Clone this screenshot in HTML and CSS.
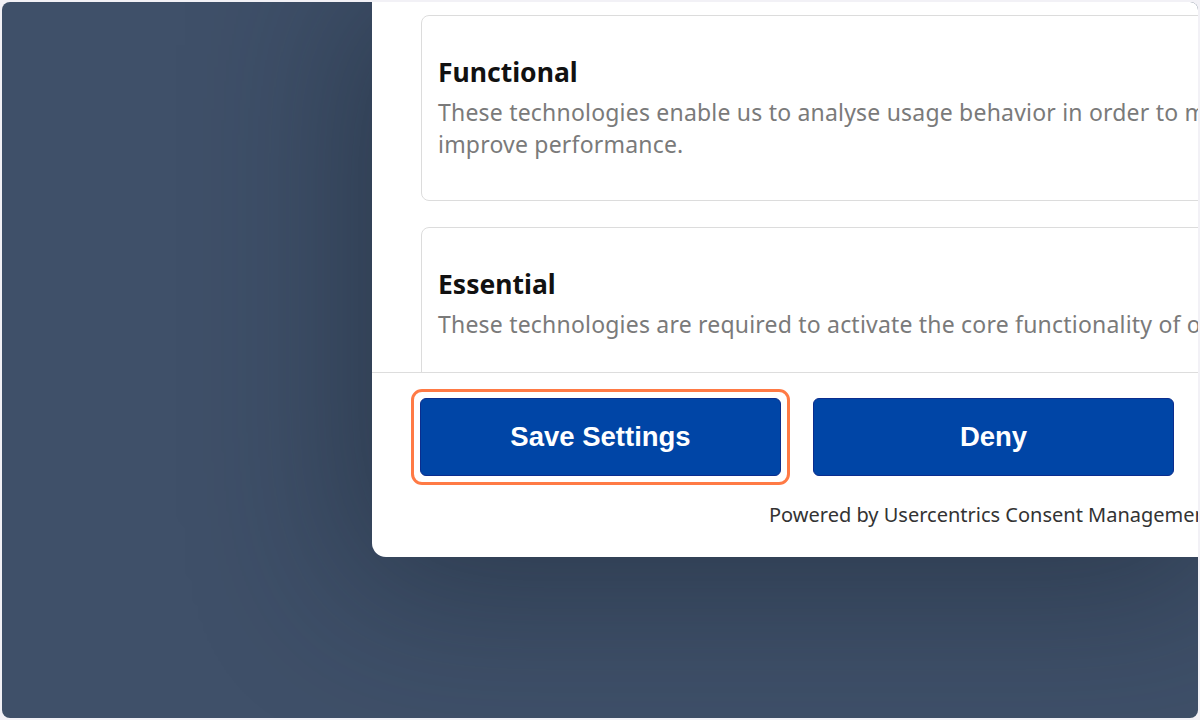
FILE: index.html
```html
<!DOCTYPE html>
<html lang="en">
<head>
<meta charset="utf-8">
<title>Privacy Settings</title>
<link rel="stylesheet" href="styles.css">
</head>
<body>
<div class="frame">
  <div class="modal">
    <div class="content">
      <section class="card card-functional">
        <h3 class="card-title">Functional</h3>
        <p class="card-text">These technologies enable us to analyse usage behavior in order to measure and<br>improve performance.</p>
      </section>
      <section class="card card-essential">
        <h3 class="card-title">Essential</h3>
        <p class="card-text">These technologies are required to activate the core functionality of our website.</p>
      </section>
    </div>
    <div class="footer">
      <div class="buttons">
        <div class="highlight-wrap">
          <button class="btn">Save Settings</button>
        </div>
        <button class="btn">Deny</button>
      </div>
      <div class="powered">Powered by Usercentrics Consent Management</div>
    </div>
  </div>
</div>
</body>
</html>
```

FILE: styles.css
```css
html, body {
  margin: 0;
  padding: 0;
}
body {
  background: #f2f1f6;
  padding: 2px;
  width: 1196px;
  height: 716px;
  overflow: hidden;
}
.frame {
  width: 1196px;
  height: 716px;
  border-radius: 8px;
  overflow: hidden;
  background: #3f5069;
  display: flex;
  justify-content: flex-end;
  align-items: flex-start;
}
.modal {
  width: 826px;
  height: 555px;
  background: #ffffff;
  border-radius: 0 0 0 14px;
  box-shadow: 0 10px 160px 20px rgba(20, 30, 45, 0.45);
  display: flex;
  flex-direction: column;
  overflow: hidden;
  font-family: "Noto Sans", "Open Sans", sans-serif;
}
.content {
  flex: 1;
  overflow: hidden;
  padding: 13px 0 0 49px;
  display: flex;
  flex-direction: column;
  gap: 26px;
}
.card {
  flex: none;
  width: 900px;
  box-sizing: border-box;
  border: 1px solid #dcdcdc;
  border-radius: 8px;
  padding: 40px 16px 0 16px;
}
.card-functional {
  height: 186px;
}
.card-essential {
  height: 200px;
}
.card-title {
  margin: 0;
  font-size: 26.5px;
  line-height: 32px;
  font-weight: 700;
  color: #111111;
}
.card-text {
  margin: 8px 0 0 0;
  font-size: 23px;
  line-height: 32px;
  letter-spacing: 0.2px;
  color: #7a7a7a;
  white-space: nowrap;
}
.footer {
  flex: none;
  height: 185px;
  box-sizing: border-box;
  border-top: 1px solid #dddddd;
  padding: 25px 0 0 48px;
  display: flex;
  flex-direction: column;
}
.buttons {
  display: flex;
  gap: 32px;
}
.highlight-wrap {
  position: relative;
  display: flex;
}
.highlight-wrap::after {
  content: "";
  position: absolute;
  left: -9px;
  top: -9px;
  right: -9px;
  bottom: -9px;
  border: 3px solid #ff7a45;
  border-radius: 11px;
  pointer-events: none;
}
.btn {
  width: 361px;
  height: 78px;
  background: #0045a6;
  border: 1px solid #0b2d8e;
  border-radius: 6px;
  color: #ffffff;
  font-family: "Liberation Sans", Arial, sans-serif;
  font-weight: 700;
  font-size: 27.5px;
  padding: 0;
}
.powered {
  margin-top: 26px;
  padding-left: 349px;
  font-size: 20px;
  line-height: 26px;
  color: #333333;
  white-space: nowrap;
}
```
